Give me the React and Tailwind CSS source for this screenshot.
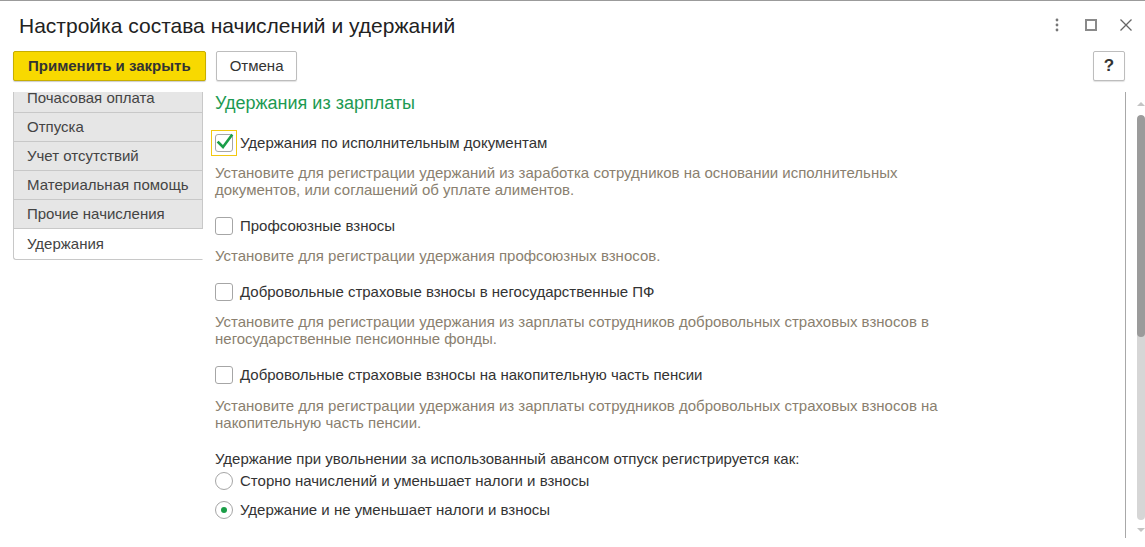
import { useState } from 'react';

const tabs = ['Почасовая оплата', 'Отпуска', 'Учет отсутствий', 'Материальная помощь', 'Прочие начисления', 'Удержания'];

const items = [
  {
    label: 'Удержания по исполнительным документам',
    hint: 'Установите для регистрации удержаний из заработка сотрудников на основании исполнительных документов, или соглашений об уплате алиментов.',
    checked: true,
    focused: true,
  },
  { label: 'Профсоюзные взносы', hint: 'Установите для регистрации удержания профсоюзных взносов.' },
  {
    label: 'Добровольные страховые взносы в негосударственные ПФ',
    hint: 'Установите для регистрации удержания из зарплаты сотрудников добровольных страховых взносов в негосударственные пенсионные фонды.',
  },
  {
    label: 'Добровольные страховые взносы на накопительную часть пенсии',
    hint: 'Установите для регистрации удержания из зарплаты сотрудников добровольных страховых взносов на накопительную часть пенсии.',
  },
];

function CheckRow({ label, checked, focused }) {
  return (
    <div className="-ml-[4px] flex h-[26px] items-center">
      <div className={'flex h-[26px] w-[26px] items-center justify-center ' + (focused ? 'border border-[#f2c811]' : '')}>
        <div className="relative h-[18px] w-[18px] rounded-[3px] border border-[#a6a6a6] bg-white">
          {checked && (
            <svg className="absolute -left-[1px] -top-[3px]" width="20" height="20" viewBox="0 0 20 20">
              <path d="M3.5 10.5 L8 15 L16.5 3.5" fill="none" stroke="#1b9e48" strokeWidth="2.6" strokeLinecap="square" />
            </svg>
          )}
        </div>
      </div>
      <span className="ml-[3px] text-[15px] text-[#333]">{label}</span>
    </div>
  );
}

function Radio({ label, checked }) {
  return (
    <div className="flex h-[24px] items-center">
      <div className="flex h-[18px] w-[18px] items-center justify-center rounded-full border border-[#a6a6a6] bg-white">
        {checked && <div className="h-[6px] w-[6px] rounded-full bg-[#1b9e48]" />}
      </div>
      <span className="ml-[7px] text-[15px] text-[#333]">{label}</span>
    </div>
  );
}

export default function App() {
  const [active] = useState(5);

  return (
    <div
      className="relative h-[547px] w-[1145px] overflow-hidden border-t border-[#9b9b9b] bg-white"
      style={{ fontFamily: '"Liberation Sans", Arial, sans-serif' }}
    >
      {/* header */}
      <div className="flex h-[48px] items-center pl-[19px] pr-[12px]">
        <h1 className="flex-1 text-[21px] leading-none text-[#222]">Настройка состава начислений и удержаний</h1>
        <div className="flex items-center gap-[22px] text-[#6b6b6b]">
          <svg width="12" height="16" viewBox="0 0 12 16">
            <circle cx="6" cy="3" r="1.4" fill="#777" />
            <circle cx="6" cy="8" r="1.4" fill="#777" />
            <circle cx="6" cy="13" r="1.4" fill="#777" />
          </svg>
          <div className="h-[12px] w-[12px] border-2 border-[#8a8a8a]" />
          <svg width="14" height="14" viewBox="0 0 14 14">
            <path d="M1.5 1.5 L12.5 12.5 M12.5 1.5 L1.5 12.5" stroke="#666" strokeWidth="1.3" />
          </svg>
        </div>
      </div>

      {/* toolbar */}
      <div className="mt-[2px] flex h-[30px] items-stretch pl-[13px] pr-[20px]">
        <button className="rounded-[2px] border border-[#c7ae00] bg-[#f8d900] px-[14px] text-[15px] font-bold text-[#333] shadow-[0_1px_1px_rgba(0,0,0,0.2)]">
          Применить и закрыть
        </button>
        <button className="ml-[10px] rounded-[2px] border border-[#bdbdbd] bg-white px-[13px] text-[15px] text-[#333] shadow-[0_1px_1px_rgba(0,0,0,0.12)]">
          Отмена
        </button>
        <div className="flex-1" />
        <button className="w-[32px] rounded-[2px] border border-[#bdbdbd] bg-white text-[17px] font-bold text-[#333] shadow-[0_1px_1px_rgba(0,0,0,0.12)]">
          ?
        </button>
      </div>

      {/* body */}
      <div className="mt-[11px] flex h-[446px]">
        <div className="ml-[13px] h-[170px] w-[190px] overflow-hidden">
          <div className="-mt-[8px]">
            {tabs.map((t, i) => (
              <div
                key={t}
                className={
                  'flex h-[29px] items-center border-x border-b px-[13px] text-[15px] text-[#444] ' +
                  (i === 0 ? 'border-t ' : '') +
                  (i === active
                    ? 'h-[31px] rounded-bl-[3px] border-[#c8c8c8] border-r-transparent bg-white'
                    : 'border-[#c8c8c8] bg-[#e6e6e6]')
                }
              >
                {t}
              </div>
            ))}
          </div>
        </div>

        <div className="ml-[12px] flex-1">
          <div className="text-[18px] leading-[22px] text-[#1d9a52]">Удержания из зарплаты</div>
          <div className="mt-[16px] flex flex-col gap-[15px]">
            {items.map((it, i) => (
              <div key={it.label}>
                <CheckRow label={it.label} checked={it.checked} focused={it.focused} />
                <p className={(i === 3 ? 'mt-[9px] ' : 'mt-[8px] ') + 'w-[740px] text-[15px] leading-[17px] text-[#8a7f6f]'}>
                  {it.hint}
                </p>
              </div>
            ))}
          </div>
          <div className="mt-[19px] text-[15px] leading-[17px] text-[#333]">
            Удержание при увольнении за использованный авансом отпуск регистрируется как:
          </div>
          <div className="mt-[2px] flex flex-col gap-[5px]">
            <Radio label="Сторно начислений и уменьшает налоги и взносы" />
            <Radio label="Удержание и не уменьшает налоги и взносы" checked />
          </div>
        </div>

        <div className="w-px bg-[#a8a8a8]" />
        <div className="ml-[11px] flex h-[440px] w-[8px] flex-col items-center pt-[10px]">
          <div className="h-0 w-0 border-x-[4px] border-b-[4px] border-x-transparent border-b-[#c4c4c4]" />
          <div className="mt-[9px] flex w-[8px] flex-1 flex-col overflow-hidden rounded-[4px] bg-[#d6d6d6]">
            <div className="h-[222px] rounded-[4px] bg-[#9b9b9b]" />
          </div>
          <div className="mt-[8px] h-0 w-0 border-x-[4px] border-t-[4px] border-x-transparent border-t-[#c4c4c4]" />
        </div>
      </div>
    </div>
  );
}
